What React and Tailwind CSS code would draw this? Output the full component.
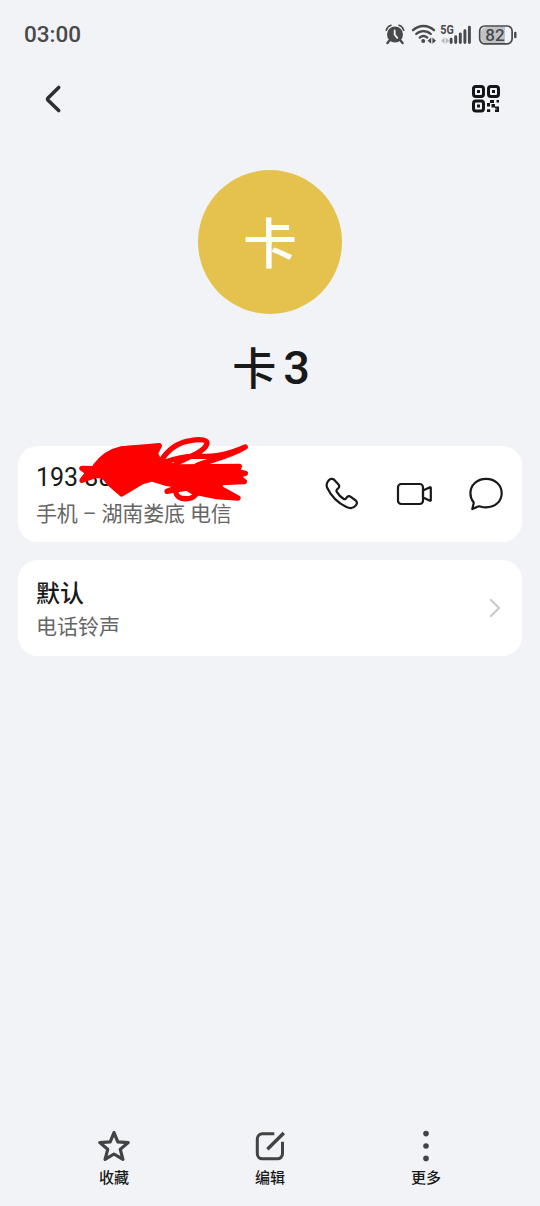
const cjk = "font-['Roboto','Noto_Sans_CJK_SC',sans-serif]";

function StatusIcons() {
  return (
    <svg width="134" height="24" viewBox="0 0 134 24" fill="none" className="text-[#48494b]">
      {/* Alarm */}
      <circle cx="11" cy="12.5" r="8" fill="currentColor" />
      <path d="M5.5 18.5 3.4 21M16.5 18.5l2.1 2.5" stroke="currentColor" strokeWidth="2.4" strokeLinecap="round" />
      <path d="M2.3 8.2C3 5.8 4.8 4 7 3.3M19.7 8.2C19 5.8 17.2 4 15 3.3" stroke="currentColor" strokeWidth="1.6" strokeLinecap="round" />
      <path d="M10.7 8.4v4.3l2.6 3.2" stroke="#f1f3f7" strokeWidth="1.8" strokeLinecap="round" />
      {/* Wi-Fi */}
      <path d="M29 8.2c6-5.6 15-5.6 21 0M32.2 12c4.2-3.9 10.4-3.9 14.6 0M35.7 15.6c2.3-2 5.3-2 7.6 0" stroke="currentColor" strokeWidth="2.3" strokeLinecap="round" />
      <circle cx="39.2" cy="19.1" r="2" fill="currentColor" />
      <path d="m47.2 15.6-3.6 3.1 3.6 3.1zM48.4 15.6v6.2l3.6-3.1z" fill="currentColor" />
      {/* Signal */}
      <text x="56.3" y="11.8" fontSize="12.5" fontWeight="700" fill="currentColor" textLength="13.5" lengthAdjust="spacingAndGlyphs" className="font-['Roboto',sans-serif]">5G</text>
      <path d="m60.6 15.6-3.6 3.1 3.6 3.1zM61.800 15.600v6.200l3.400-3.100z" fill="#b9babe" />
      <path d="M67.1 17.3v3.3M71.7 14.7v5.9M76.3 12v8.6M80.9 8.8v11.8M85.4 5.3v15.3" stroke="currentColor" strokeWidth="2.9" strokeLinecap="round" />
      {/* Battery */}
      <path d="M102 4.5h19v16.8h-19a5 5 0 0 1-5-5v-6a5 5 0 0 1 5-5z" fill="#c1c2c6" />
      <rect x="95.7" y="4" width="32.4" height="17.8" rx="5" stroke="currentColor" strokeWidth="1.7" />
      <path d="M131.3 11v4" stroke="currentColor" strokeWidth="2.4" strokeLinecap="round" />
      <text x="110.9" y="18.600" textAnchor="middle" fontSize="17" fontWeight="500" fill="currentColor" className="font-['Roboto',sans-serif]">82</text>
    </svg>
  );
}

function QrIcon() {
  return (
    <svg width="28" height="28" viewBox="0 0 28 28" fill="none" stroke="#151617" strokeWidth="3">
      <rect x="1.5" y="1.5" width="10" height="10" rx="2.4" />
      <rect x="16.5" y="1.5" width="10" height="10" rx="2.4" />
      <rect x="1.5" y="16" width="10" height="10" rx="2.4" />
      <path d="M5 5h3v3H5zM20 5h3v3h-3zM5 19.5h3v3H5zM15 18h3v3.5h-3zM18 15h4v3h-4zM24.5 15H27v2.6h-2.5zM19.5 19h3.5v3.5h-3.5zM23 21.5h4V27h-4v-2.6h1.6v-1H23zM15 24.2h3.2V27H15z" fill="#151617" stroke="none" />
    </svg>
  );
}

const strokeProps = { fill: 'none', stroke: '#191919', strokeWidth: 2.2, strokeLinecap: 'round', strokeLinejoin: 'round' };

function PhoneIcon() {
  return (
    <svg width="36" height="36" viewBox="0 0 36 36" {...strokeProps}>
      <path d="M4.6 4.4C6.400 2.400 8.700 2.300 10.300 3.900l4 4.300c1.200 1.300 1.200 2.500.2 3.700l-1.500 1.600c-.7.800-.7 1.500-.2 2.400 1.700 2.800 3.900 5.100 6.700 6.900.8.600 1.600.5 2.300-.2l1.400-1.700c1.100-1 2.400-1 3.600-.1l4.900 3.700c1.600 1.400 1.600 3.100.2 4.900-2.300 2.900-5.500 3.500-9.400 1.700C14.200 27 7 19.900 3.200 11.700 1.700 8.400 2.600 6.600 4.600 4.400z" />
    </svg>
  );
}

function VideoIcon() {
  return (
    <svg width="36" height="36" viewBox="0 0 36 36" {...strokeProps}>
      <rect x="2" y="8" width="25" height="20" rx="3.2" />
      <path d="m27 14.4 7-3.2a.6.6 0 0 1 .8.6v12.4a.6.6 0 0 1-.8.6l-7-3.2z" />
    </svg>
  );
}

function ChatIcon() {
  return (
    <svg width="36" height="36" viewBox="0 0 36 36" {...strokeProps}>
      <path d="M18.1 2.900C9 2.900 2.400 9.200 2.400 17.200c0 3.300 1 6.200 3 8.800.6.800.4 1.600-.1 2.800l-1 4.300 5.700-2.500c.8-.4 1.400-.4 2.300-.1 1.800.6 3.800.9 5.800.9 9 0 15.600-6.200 15.600-14.200S27.100 2.900 18.100 2.900z" />
    </svg>
  );
}

function StarIcon() {
  return (
    <svg width="32" height="32" viewBox="0 0 32 32" fill="none" stroke="#424344" strokeWidth="3.200" strokeLinejoin="round">
      <path d="m16 2.600 3.800 9.200 10.400.800-7.900 6.700 2.600 10.100L16 24l-8.900 5.400 2.600-10.100-7.900-6.700 10.400-.8z" />
    </svg>
  );
}

function EditIcon() {
  return (
    <svg width="32" height="32" viewBox="0 0 32 32" fill="none" stroke="#424344" strokeWidth="3">
      <path d="M20.300 3.800H8.300a5 5 0 0 0-5 5v15a5 5 0 0 0 5 5h15.200a5 5 0 0 0 5-5V11.800" />
      <path d="M13.400 19.300 29.800 3" strokeWidth="3.400" />
    </svg>
  );
}

function MoreIcon() {
  return (
    <svg width="32" height="32" viewBox="0 0 32 32" fill="#424344">
      <circle cx="16" cy="3.6" r="2.8" />
      <circle cx="16" cy="16" r="2.8" />
      <circle cx="16" cy="28.4" r="2.8" />
    </svg>
  );
}

// Marker strokes hiding the rest of the number
function Scribble() {
  return (
    <svg width="172" height="68" viewBox="24 18 516 204" className="absolute left-[60px] top-[-10px]" fill="none" stroke="#fe0000" strokeWidth="16" strokeLinecap="round" strokeLinejoin="round">
      <path d="M36 115 76 116C92 92 120 73 151 59 192 52 230 58 268 47L256 70 262 82 257 94 330 111 508 109 502 125 526 130 502 138 523 155 452 158 450 174 504 204 440 200 370 186 350 174 291 184 334 168 290 160 246 147 216 155 155 192 118 160 101 138 78 136 36 151 54 128z" fill="#fe0000" />
      <path d="M76 108C98 78 128 62 152 57L262 48 250 90 160 130z" fill="#fe0000" />
      <path d="M230 100C250 100 264 94 276 88 300 52 330 36 362 32c30-7 54-2 48 11-8 22-50 36-90 56M286 96c28-10 62-18 92-17 58 1 94-4 148-28-50 30-104 39-144 55" />
      <path d="M318 188c4 24 48 24 62 2" />
    </svg>
  );
}

const tabs = [
  { label: '收藏', icon: StarIcon },
  { label: '编辑', icon: EditIcon },
  { label: '更多', icon: MoreIcon },
];

export default function App() {
  return (
    <div className={`flex h-[1206px] w-[540px] flex-col bg-[#f1f3f7] text-[#191919] ${cjk}`}>
      {/* Status bar */}
      <div className="flex h-[68px] items-center justify-between pl-6 pr-[22px]">
        <span className="text-[22.5px] font-medium leading-none text-[#48494b]">03:00</span>
        <StatusIcons />
      </div>

      {/* Header */}
      <header className="flex h-[62px] items-center justify-between pl-[42px] pr-10">
        <button aria-label="返回">
          <svg width="22" height="30" viewBox="0 0 22 30" fill="none" stroke="#2d2e2f" strokeWidth="3.6" strokeLinecap="round" strokeLinejoin="round">
            <path d="M16.7 3.5 6.3 13.7a2 2 0 0 0 0 2.8l10.400 10" />
          </svg>
        </button>
        <button aria-label="二维码"><QrIcon /></button>
      </header>

      {/* Avatar and name */}
      <section className="flex h-[316px] flex-col items-center pt-[39.5px]">
        <div className="flex h-36 w-36 items-center justify-center rounded-full bg-[#e4c24d]">
          <span className="pt-2 text-[54px] font-medium leading-none text-white">卡</span>
        </div>
        <h1 className="mt-[28.5px] flex h-14 items-center gap-[7px] pl-0.5 font-medium leading-none">
          <span className="text-[44px]">卡</span>
          <span className="pb-[5px] text-[47px]">3</span>
        </h1>
      </section>

      {/* Cards */}
      <main className="flex flex-1 flex-col gap-[18px] px-[18px]">
        <div className="relative flex h-24 items-center rounded-[20px] bg-white px-[18px]">
          <div className="flex flex-1 flex-col pt-1">
            <span className="text-[25px] leading-[36px]">193 88</span>
            <span className="text-[21px] leading-[36px] tracking-[-0.15px] text-[#666]">手机 – 湖南娄底 电信</span>
          </div>
          <div className="flex gap-9">
            <button aria-label="电话"><PhoneIcon /></button>
            <button aria-label="视频"><VideoIcon /></button>
            <button aria-label="短信"><ChatIcon /></button>
          </div>
          <Scribble />
        </div>

        <div className="flex h-24 items-center justify-between rounded-[20px] bg-white pl-[18px] pr-5">
          <div className="flex flex-col pt-1">
            <span className="pt-0.5 text-[24px] font-medium leading-[32px]">默认</span>
            <span className="text-[21px] leading-[34px] text-[#666]">电话铃声</span>
          </div>
          <svg width="14" height="22" viewBox="0 0 14 22" fill="none" stroke="#cccccc" strokeWidth="2.4" strokeLinecap="round" strokeLinejoin="round">
            <path d="m3 3 8 8-8 8" />
          </svg>
        </div>
      </main>

      {/* Bottom bar */}
      <nav className="flex h-[76px] px-9">
        {tabs.map(({ label, icon: Icon }) => (
          <button key={label} className="flex flex-1 flex-col items-center">
            <Icon />
            <span className="mt-[5px] text-[15px] font-medium leading-[22px]">{label}</span>
          </button>
        ))}
      </nav>
    </div>
  );
}
